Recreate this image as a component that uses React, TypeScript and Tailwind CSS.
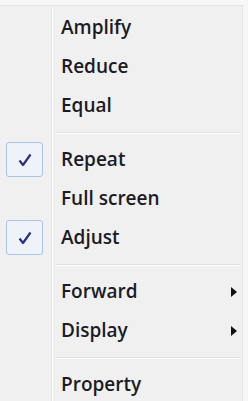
import React from "react";

type Item = { label: string; checked?: boolean; sub?: boolean } | "sep";

const items: Item[] = [
  { label: "Amplify" },
  { label: "Reduce" },
  { label: "Equal" },
  "sep",
  { label: "Repeat", checked: true },
  { label: "Full screen" },
  { label: "Adjust", checked: true },
  "sep",
  { label: "Forward", sub: true },
  { label: "Display", sub: true },
  "sep",
  { label: "Property" },
];

function Check() {
  return (
    <div className="w-[37px] h-[35px] rounded-[3px] border border-[#a9c4e6] bg-[#eef3fa] flex items-center justify-center">
      <svg width="16" height="16" viewBox="0 0 16 16">
        <path d="M2.5 8.5 L6 13 L13.5 2.5" fill="none" stroke="#2b2f8a" strokeWidth="2.2" strokeLinejoin="round" />
      </svg>
    </div>
  );
}

export default function App() {
  return (
    <div className="w-[248px] h-[401px] bg-[#f7f7f7] overflow-hidden pt-[5px] font-['Open_Sans',sans-serif]">
      <div className="w-[243px] h-full bg-[#f0f0f0] border-r border-t border-[#e6e6e6] pt-[2px]">
        {items.map((it, i) =>
          it === "sep" ? (
            <div key={i} className="flex h-[15px]">
              <div className="w-[52px] shrink-0 border-r border-[#e2e3e3]" />
              <div className="flex-1 border-l border-white flex flex-col justify-center pl-[3px] pr-[2px]">
                <div className="h-px bg-[#e0e0e0]" />
                <div className="h-px bg-white" />
              </div>
            </div>
          ) : (
            <div key={i} className="flex h-[39px]">
              <div className="w-[52px] shrink-0 border-r border-[#e2e3e3] flex items-center pl-[6px]">
                {it.checked && <Check />}
              </div>
              <div className="flex-1 border-l border-white flex items-center pl-[8px] pr-[5px] text-[19px] font-semibold text-[#1b1b26]">
                <span className="flex-1">{it.label}</span>
                {it.sub && (
                  <svg width="6" height="10" viewBox="0 0 6 10">
                    <path d="M0 0 L6 5 L0 10 Z" fill="#111" />
                  </svg>
                )}
              </div>
            </div>
          )
        )}
      </div>
    </div>
  );
}
